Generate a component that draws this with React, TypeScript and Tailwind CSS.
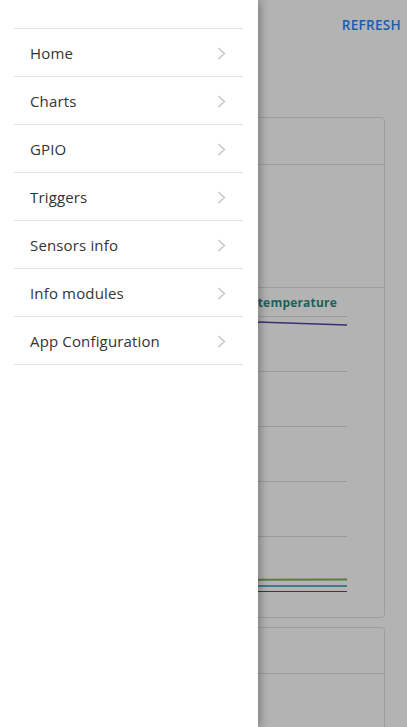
const menu = [
	"Home",
	"Charts",
	"GPIO",
	"Triggers",
	"Sensors info",
	"Info modules",
	"App Configuration",
];

function Chevron() {
	return (
		<svg width="9" height="13" viewBox="0 0 9 13" fill="none">
			<polyline points="1.5,1 7.5,6.5 1.5,12" stroke="#c4c4c4" strokeWidth="1.3" />
		</svg>
	);
}

// the line chart behind the drawer
function TempChart() {
	const grid = [1.5, 56.5, 111.5, 166.5, 221.5];
	return (
		<svg width="340" height="299" className="block">
			{grid.map((y) => (
				<line key={y} x1="0" y1={y} x2="324" y2={y} stroke="#999" strokeWidth="1" />
			))}
			<path d="M0 5 L150 6.5 L234 7 L324 10" stroke="#3b2e72" strokeWidth="1.5" fill="none" />
			<line x1="0" y1="265" x2="324" y2="264.5" stroke="#5a7d3c" strokeWidth="2" />
			<line x1="0" y1="271" x2="324" y2="271" stroke="#3f7d8a" strokeWidth="2" />
			<line x1="0" y1="276.5" x2="324" y2="276.5" stroke="#3a3a3a" strokeWidth="1" />
		</svg>
	);
}

function ChartCard() {
	return (
		<div className="mx-[22px] mt-[83px] h-[501px] rounded border border-[#9e9e9e] flex flex-col">
			<div className="h-[47px] border-b border-[#9e9e9e]" />
			<div className="h-[123px] border-b border-[#9e9e9e]" />
			<div className="flex h-[27px] items-center justify-end pr-[47px] pt-[2px]">
				<span className="whitespace-nowrap text-[12px] font-bold leading-[16px] text-[#1f5f57] tracking-[0.2px]">
					DS18B20 temperature
				</span>
			</div>
			<TempChart />
		</div>
	);
}

export default function App() {
	return (
		<div
			className="relative h-[727px] w-[407px] overflow-hidden bg-[#b3b3b3]"
			style={{ fontFamily: '"Open Sans", "Noto Sans", sans-serif' }}
		>
			<div className="flex flex-col">
				<div className="flex justify-end pr-[6px] pt-[16px]">
					<span className="text-[13.5px] font-semibold leading-[18px] text-[#1c5bb0] tracking-[0.3px]">
						REFRESH
					</span>
				</div>
				<ChartCard />
				<div className="mx-[22px] mt-[9px] h-[120px] rounded-t border border-b-0 border-[#9e9e9e]">
					<div className="h-[46px] border-b border-[#9e9e9e]" />
				</div>
			</div>

			<div className="absolute left-0 top-0 h-full w-[258px] bg-white shadow-[3px_0_8px_rgba(0,0,0,0.28)]">
				<ul className="ml-[14px] mr-[15px] mt-[28px] border-t border-[#e0e0e0]">
					{menu.map((m) => (
						<li
							key={m}
							className="flex h-[48px] items-center justify-between border-b border-[#e0e0e0] pl-[16px] pr-[17px] pt-[2px]"
						>
							<span className="text-[15px] tracking-[0.15px] text-[#333]">{m}</span>
							<Chevron />
						</li>
					))}
				</ul>
			</div>
		</div>
	);
}
